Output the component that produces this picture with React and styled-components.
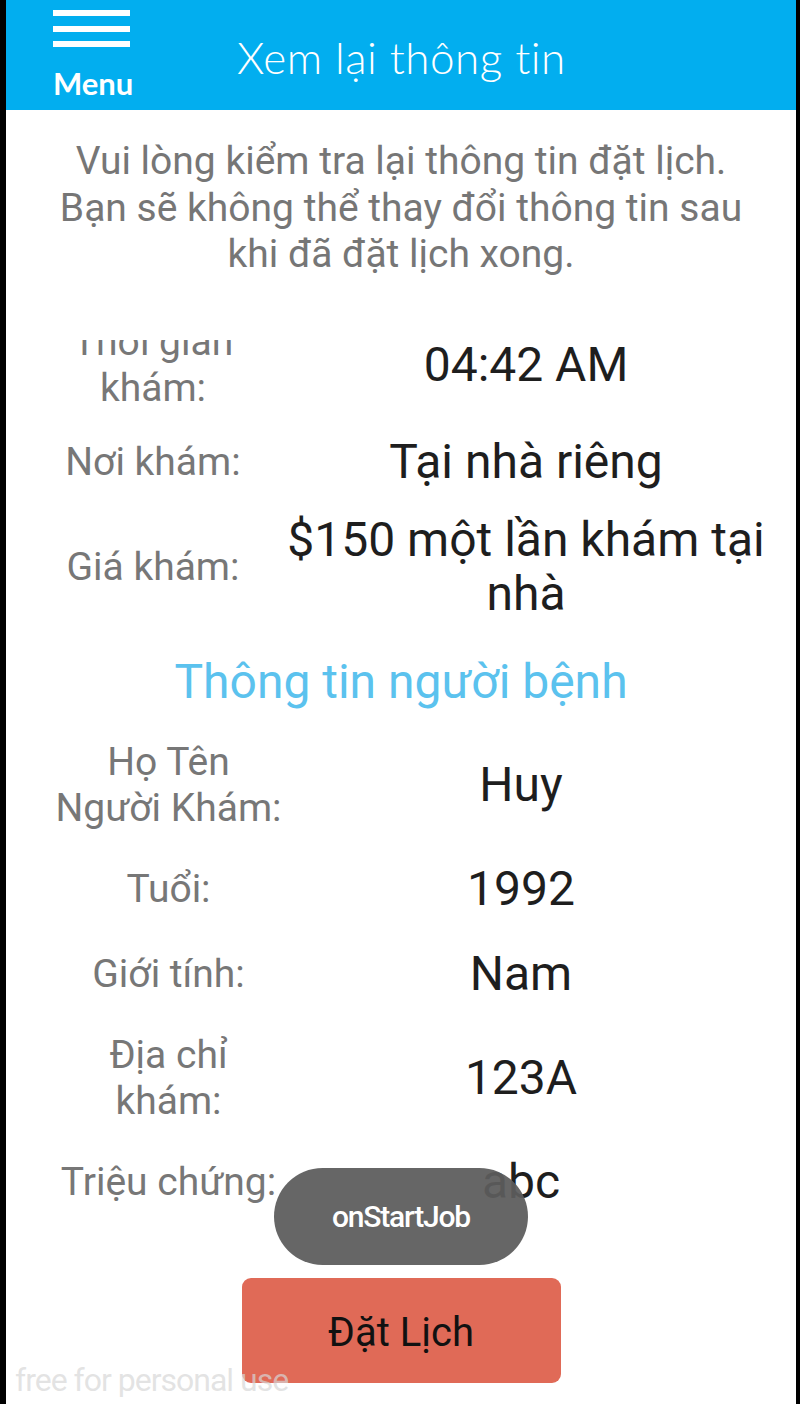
import React from 'react';
import styled, { createGlobalStyle } from 'styled-components';

const GlobalStyle = createGlobalStyle`
  html, body {
    margin: 0;
    padding: 0;
    background: #000;
  }
  body {
    font-family: Roboto, 'Noto Sans', sans-serif;
  }
`;

const Screen = styled.div`
  position: relative;
  display: flex;
  flex-direction: column;
  width: 790px;
  height: 1404px;
  margin-left: 6px;
  background: #fff;
  overflow: hidden;
`;

const Header = styled.header`
  display: flex;
  align-items: center;
  flex: 0 0 110px;
  background: #02aeef;
`;

const MenuButton = styled.div`
  display: flex;
  flex-direction: column;
  align-self: flex-start;
  width: 77px;
  margin-left: 47px;
  padding-top: 10px;
`;

const Bars = styled.div`
  display: flex;
  flex-direction: column;
  gap: 9.5px;
`;

const Bar = styled.span`
  display: block;
  height: 6px;
  background: #fff;
`;

const MenuLabel = styled.span`
  margin-top: 22px;
  color: #fff;
  font-family: Lato, 'Open Sans', sans-serif;
  font-weight: 700;
  font-size: 31px;
  line-height: 28px;
  text-align: center;
`;

const Title = styled.h1`
  margin: 4px 0 0 107px;
  color: #fff;
  font-family: Lato, 'Open Sans', sans-serif;
  font-weight: 300;
  font-size: 44px;
  letter-spacing: 0.5px;
`;

const Intro = styled.p`
  flex: 0 0 230px;
  margin: 0;
  padding: 28px 40px 0;
  box-sizing: border-box;
  color: #767676;
  font-size: 39px;
  line-height: 46.5px;
  text-align: center;
`;

const Viewport = styled.div`
  flex: 1;
  overflow: hidden;
`;

/* the list is scrolled a little: its first label is cut by the viewport */
const Content = styled.div`
  margin-top: -21px;
`;

const Section = styled.div`
  display: grid;
  grid-template-columns: ${(p) => p.$cols};
  align-items: center;
  row-gap: ${(p) => p.$gap}px;
  padding-left: ${(p) => p.$inset}px;
`;

const Label = styled.div`
  color: #777;
  font-size: 39px;
  line-height: 46px;
  text-align: center;
`;

const Value = styled.div`
  color: #1e1e1e;
  font-size: 48px;
  line-height: 54px;
  text-align: center;
`;

const SectionTitle = styled.h2`
  margin: 33px 0 29px;
  color: #5bc2ee;
  font-weight: 400;
  font-size: 48px;
  line-height: 56px;
  text-align: center;
`;

const Footer = styled.div`
  display: flex;
  justify-content: center;
  flex: 0 0 auto;
  padding: 12px 0 21px;
`;

const BookButton = styled.button`
  width: 319px;
  height: 105px;
  padding: 4px 0 0;
  border: 0;
  border-radius: 9px;
  background: #e06a57;
  color: #111;
  font-family: Roboto, sans-serif;
  font-size: 40px;
`;

const Toast = styled.div`
  position: absolute;
  top: 1168px;
  left: 50%;
  transform: translateX(-50%);
  display: flex;
  align-items: center;
  justify-content: center;
  width: 254px;
  height: 97px;
  border-radius: 49px;
  background: rgba(92, 92, 92, 0.94);
  color: #fff;
  font-size: 30px;
  font-weight: 500;
  letter-spacing: -1.2px;
`;

const Watermark = styled.div`
  position: absolute;
  left: 9px;
  bottom: 5px;
  color: rgba(215, 215, 215, 0.7);
  font-size: 32px;
  letter-spacing: -1px;
  pointer-events: none;
`;

const bookingRows = [
  { label: 'Thời gian khám:', value: '04:42 AM' },
  { label: 'Nơi khám:', value: 'Tại nhà riêng' },
  { label: 'Giá khám:', value: '$150 một lần khám tại nhà' },
];

const patientRows = [
  { label: 'Họ Tên Người Khám:', value: 'Huy' },
  { label: 'Tuổi:', value: '1992' },
  { label: 'Giới tính:', value: 'Nam' },
  { label: 'Địa chỉ khám:', value: '123A' },
  { label: 'Triệu chứng:', value: 'abc' },
];

export default function App() {
  return (
    <>
      <GlobalStyle />
      <Screen>
        <Header>
          <MenuButton>
            <Bars>
              <Bar />
              <Bar />
              <Bar />
            </Bars>
            <MenuLabel>Menu</MenuLabel>
          </MenuButton>
          <Title>Xem lại thông tin</Title>
        </Header>

        <Intro>
          Vui lòng kiểm tra lại thông tin đặt lịch. Bạn sẽ không thể thay đổi thông tin sau
          khi đã đặt lịch xong.
        </Intro>

        <Viewport>
          <Content>
            <Section $cols="246px 500px" $inset={24} $gap={24}>
              {bookingRows.map((r) => (
                <React.Fragment key={r.label}>
                  <Label>{r.label}</Label>
                  <Value>{r.value}</Value>
                </React.Fragment>
              ))}
            </Section>

            <SectionTitle>Thông tin người bệnh</SectionTitle>

            <Section $cols="229px 476px" $inset={48} $gap={31}>
              {patientRows.map((r) => (
                <React.Fragment key={r.label}>
                  <Label>{r.label}</Label>
                  <Value>{r.value}</Value>
                </React.Fragment>
              ))}
            </Section>
          </Content>
        </Viewport>

        <Footer>
          <BookButton>Đặt Lịch</BookButton>
        </Footer>

        <Toast>onStartJob</Toast>
        <Watermark>free for personal use</Watermark>
      </Screen>
    </>
  );
}
